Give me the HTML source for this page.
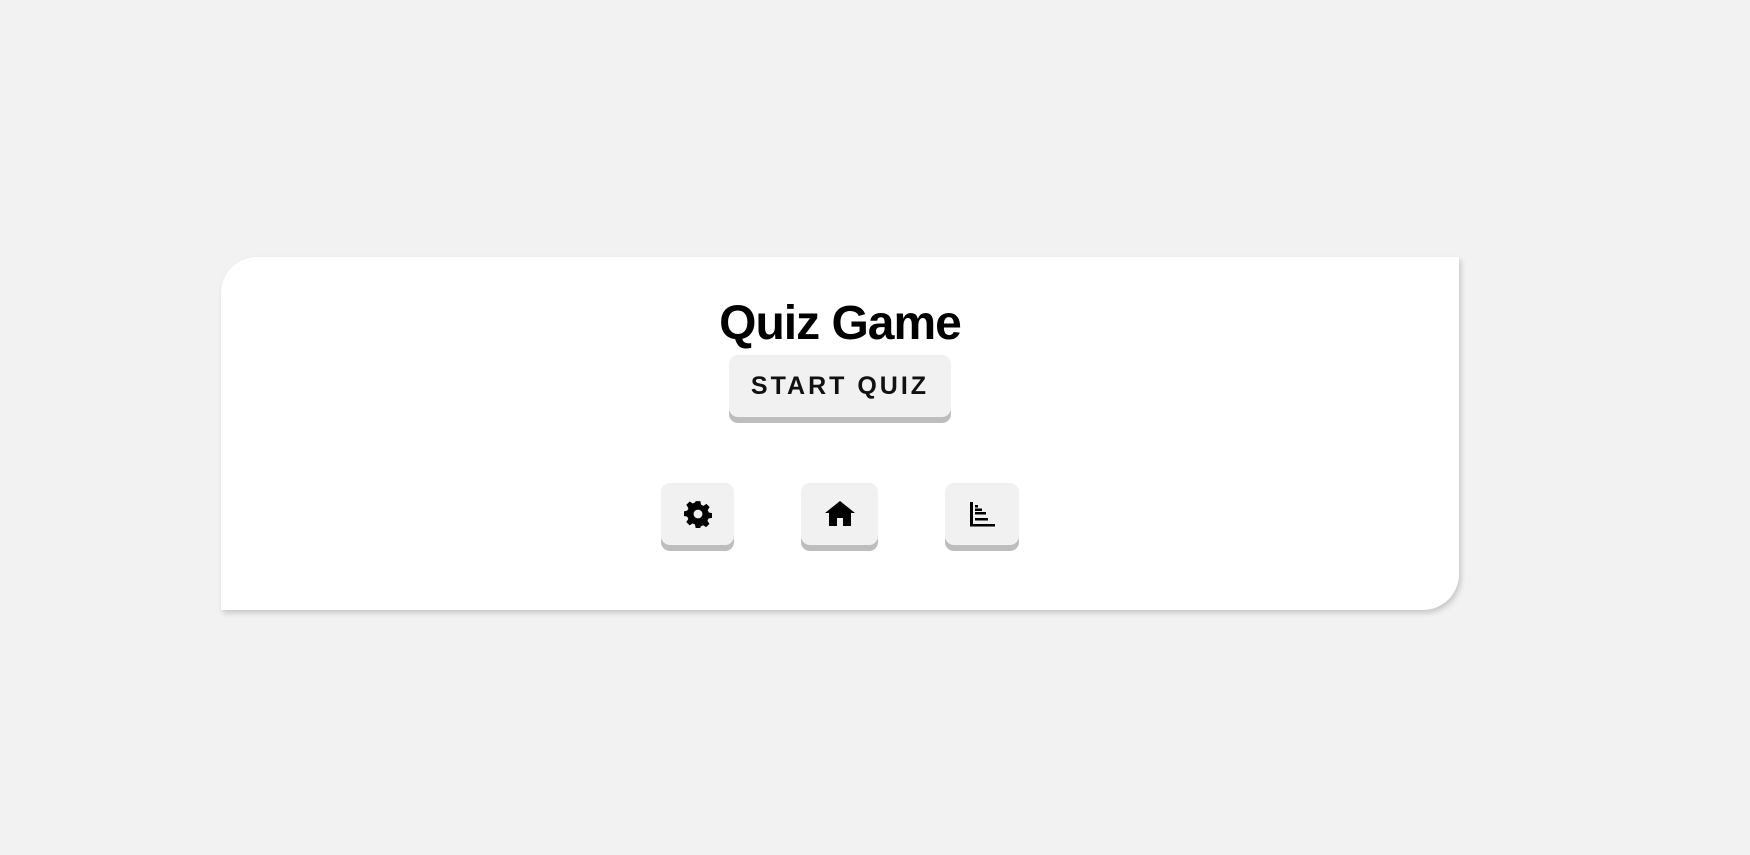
<!DOCTYPE html>
<html><head><style>
html,body{margin:0;width:1750px;height:855px;background:#f2f2f2;font-family:"Liberation Sans",sans-serif;overflow:hidden}
.card{position:absolute;left:221px;top:257px;width:1238px;height:353px;background:#fff;border-radius:36px 0 36px 0;box-shadow:2px 3px 6px rgba(0,0,0,.18)}
h1{position:absolute;left:221px;width:1238px;top:296px;margin:0;text-align:center;font-size:48px;font-weight:bold;letter-spacing:-1px;color:#000}
.btn{position:absolute;background:#f1f1f1;border-radius:9px;box-shadow:0 6px 0 #bdbdbd;display:flex;align-items:center;justify-content:center}
.start{left:729px;top:355px;width:222px;height:62px;font-size:25px;font-weight:bold;letter-spacing:3px;color:#111}
</style></head><body>
<div class="card"></div>
<h1>Quiz Game</h1>
<div class="btn start">START QUIZ</div>
<div class="btn" style="left:661px;top:483px;width:73px;height:62px">
<svg width="28" height="28" viewBox="0 0 24 24"><path fill="#000" d="M10 1h4l.6 3 2 1 2.6-1.7 2.8 2.8L20.3 8.7l1 2 2.7.6v4l-3 .6-.9 2 1.7 2.6-2.8 2.8-2.6-1.7-2 1L14 24h-4l-.6-3-2-1-2.6 1.7L2 18.9l1.7-2.6-.9-2L0 13.7v-4l2.8-.6 1-2L2 4.1 4.9 1.3 7.5 3l2-1z M12 8.2a3.8 3.8 0 1 0 0 7.6 3.8 3.8 0 0 0 0-7.6z" fill-rule="evenodd"/></svg></div>
<div class="btn" style="left:801px;top:483px;width:77px;height:62px">
<svg width="32" height="28" viewBox="0 0 32 28"><path fill="#000" d="M16 1 1 13h4v13h8v-8h6v8h8V13h4z"/></svg></div>
<div class="btn" style="left:945px;top:483px;width:74px;height:62px">
<svg width="28" height="28" viewBox="0 0 28 28"><path fill="#000" d="M2 2h3v22h22v2.5H2z M7 5h3v2.5H7z M7 12h11v2.5H7z M7 18h13v2.5H7z M7 8.5h7V11H7z"/></svg></div>
</body></html>
